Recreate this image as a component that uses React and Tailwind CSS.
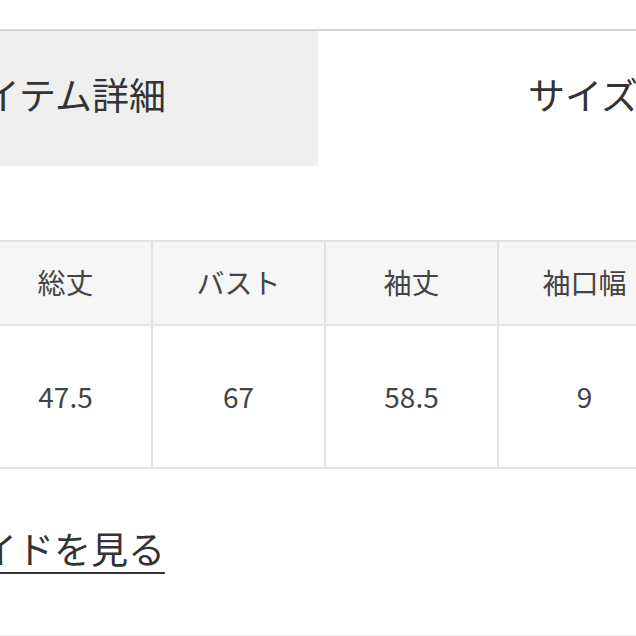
export default function App() {
  const cols = [
    { h: "サイズ", v: "F" },
    { h: "総丈", v: "47.5" },
    { h: "バスト", v: "67" },
    { h: "袖丈", v: "58.5" },
    { h: "袖口幅", v: "9" },
    { h: "肩幅", v: "" },
  ];
  return (
    <div
      className="w-[636px] h-[636px] overflow-hidden bg-white border-b border-[#ededed] text-[#333]"
      style={{ fontFamily: '"Noto Sans CJK JP", "Noto Sans", sans-serif' }}
    >
      <div className="h-[29px]" />
      <div className="h-[2px] bg-[#d4d4d4]" />
      <div className="flex h-[135px]">
        <div className="w-[318px] shrink-0 bg-[#efefef] flex items-center justify-end pr-[152px] pb-[9px] whitespace-nowrap text-[37px] leading-none">
          アイテム詳細
        </div>
        <div className="flex-1 flex items-center pl-[210px] pb-[9px] whitespace-nowrap text-[37px] leading-none">
          サイズガイド
        </div>
      </div>
      <div className="mt-[74px] -ml-[193px] w-[1100px]">
        <div className="flex border-t-2 border-b-2 border-[#e3e3e3] bg-[#f6f6f6] h-[86px]">
          {cols.map((c, i) => (
            <div
              key={i}
              className="w-[173px] shrink-0 border-r-2 border-[#e3e3e3] flex items-center justify-center text-[28px] leading-none text-[#444] pb-[2px]"
            >
              {c.h}
            </div>
          ))}
        </div>
        <div className="flex border-b-2 border-[#e3e3e3] h-[143px]">
          {cols.map((c, i) => (
            <div
              key={i}
              className="w-[173px] shrink-0 border-r-2 border-[#e3e3e3] flex items-center justify-center text-[28px] leading-none text-[#444] pb-[2px]"
            >
              {c.v}
            </div>
          ))}
        </div>
      </div>
      <div className="mt-[61px] -ml-[167px] whitespace-nowrap text-[37px] leading-none">
        <span className="underline decoration-2 underline-offset-[8px]">
          サイズガイドを見る
        </span>
      </div>
    </div>
  );
}
